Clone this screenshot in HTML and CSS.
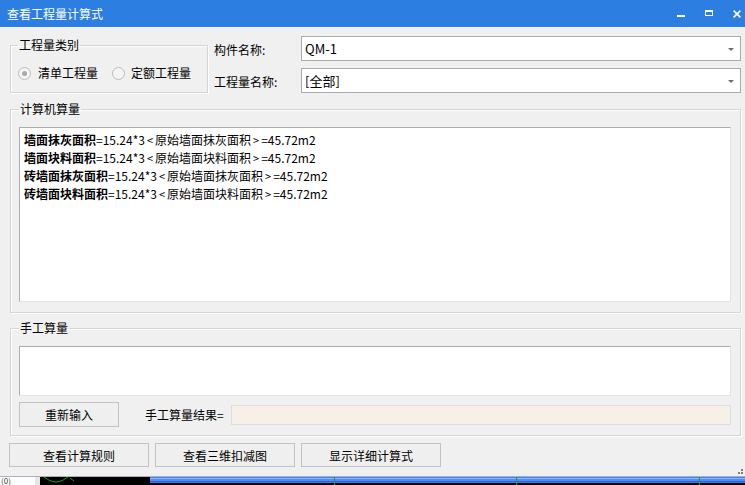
FILE: index.html
```html
<!DOCTYPE html>
<html lang="zh-CN">

<head>
    <meta charset="UTF-8" />
    <title>查看工程量计算式</title>
    <link rel="stylesheet" href="styles.css">
</head>

<body>
    <div class="window">
        <!-- Title bar -->
        <div class="titlebar">
            <span class="title">查看工程量计算式</span>
            <div class="controls">
                <svg width="8" height="8" viewBox="0 0 8 8"><rect x="0" y="5" width="8" height="2" fill="#fff" /></svg>
                <svg width="8" height="8" viewBox="0 0 8 8"><rect x="0.5" y="0.5" width="7" height="5" fill="none" stroke="#fff" /><rect x="0" y="0" width="8" height="2" fill="#fff" /></svg>
                <svg width="8" height="8" viewBox="0 0 8 8"><path d="M0.6 0.6 L7.4 7.4 M7.4 0.6 L0.6 7.4" stroke="#fff" stroke-width="1.6" /></svg>
            </div>
        </div>

        <div class="content">
            <div class="top-row">
                <fieldset class="group type-group">
                    <legend>工程量类别</legend>
                    <div class="radios">
                        <label class="radio"><span class="dot checked"></span>清单工程量</label>
                        <label class="radio"><span class="dot"></span>定额工程量</label>
                    </div>
                </fieldset>
                <div class="form">
                    <span class="label">构件名称:</span>
                    <div class="combo"><span class="combo-text">QM-1</span><span class="arrow"></span></div>
                    <span class="label">工程量名称:</span>
                    <div class="combo"><span class="combo-text">[全部]</span><span class="arrow"></span></div>
                </div>
            </div>

            <fieldset class="group calc-group">
                <legend>计算机算量</legend>
                <div class="textbox calc-text">
                    <div><b>墙面抹灰面积</b>=15.24*3<span class="ang">&lt;</span>原始墙面抹灰面积<span class="ang">&gt;</span>=45.72m2</div>
                    <div><b>墙面块料面积</b>=15.24*3<span class="ang">&lt;</span>原始墙面块料面积<span class="ang">&gt;</span>=45.72m2</div>
                    <div><b>砖墙面抹灰面积</b>=15.24*3<span class="ang">&lt;</span>原始墙面抹灰面积<span class="ang">&gt;</span>=45.72m2</div>
                    <div><b>砖墙面块料面积</b>=15.24*3<span class="ang">&lt;</span>原始墙面块料面积<span class="ang">&gt;</span>=45.72m2</div>
                </div>
            </fieldset>

            <fieldset class="group manual-group">
                <legend>手工算量</legend>
                <div class="textbox manual-text"></div>
                <div class="manual-row">
                    <button class="btn reset-btn">重新输入</button>
                    <span class="result-label">手工算量结果=</span>
                    <div class="result-box"></div>
                </div>
            </fieldset>

            <div class="actions">
                <button class="btn action-btn">查看计算规则</button>
                <button class="btn action-btn">查看三维扣减图</button>
                <button class="btn action-btn">显示详细计算式</button>
            </div>
        </div>

        <!-- Resize grip -->
        <svg class="grip" width="5" height="5" viewBox="0 0 5 5">
            <rect x="3" y="0" width="2" height="2" fill="#7f7f7f" />
            <rect x="0" y="3" width="2" height="2" fill="#7f7f7f" />
            <rect x="3" y="3" width="2" height="2" fill="#7f7f7f" />
        </svg>

        <!-- Application behind the dialog -->
        <div class="behind">
            <div class="behind-left">(0)</div>
            <div class="behind-gap"></div>
            <div class="behind-dark">
                <svg width="110" height="8" viewBox="0 0 110 8"><path d="M4 0 Q16 10 28 0 M30 1 L34 4" stroke="#1c9a2c" fill="none" stroke-width="1" /></svg>
            </div>
            <div class="behind-lines">
                <span class="tick" style="left:184px"></span>
                <span class="tick" style="left:366px"></span>
                <span class="tick" style="left:549px"></span>
            </div>
        </div>
    </div>
</body>

</html>
```

FILE: styles.css
```css
body {
    margin: 0;
    background-color: #f0f0f0;
    font-family: "Noto Sans CJK SC", "Liberation Sans", sans-serif;
    font-size: 12px;
    color: #000;
}

.window {
    width: 745px;
    height: 485px;
    display: flex;
    flex-direction: column;
    position: relative;
    overflow: hidden;
}

/* Title bar */
.titlebar {
    height: 27px;
    flex-shrink: 0;
    background-color: #2c7fe1;
    color: #fff;
    display: flex;
    padding: 0 4px 0 7px;
}

.title {
    flex: 1;
    line-height: 27px;
    font-size: 12px;
}

.controls {
    display: flex;
    gap: 20px;
    margin-top: 10px;
    height: 8px;
}

.controls svg {
    display: block;
}

/* Main content */
.content {
    padding: 9px 4px 0 10px;
    display: flex;
    flex-direction: column;
}

.top-row {
    display: flex;
    gap: 6px;
}

.group {
    margin: 0;
    min-width: 0;
    border: 1px solid #d5d5d5;
    box-shadow: inset 1px 1px 0 #fff, 1px 1px 0 #fff;
}

.group legend {
    padding: 0 1px;
    line-height: 16px;
    font-size: 12px;
}

.type-group {
    width: 198px;
    box-sizing: border-box;
    margin-top: 1px;
    padding: 12px 0 11px 7px;
}

.radios {
    display: flex;
    height: 16px;
    align-items: center;
}

.radio {
    display: flex;
    align-items: center;
    gap: 7px;
    margin-right: 14px;
    line-height: 16px;
}

.radio+.radio {
    gap: 6px;
}

.dot {
    width: 11px;
    height: 11px;
    border: 1px solid #bcbcbc;
    border-radius: 50%;
    background-color: #f4f4f4;
    display: flex;
    align-items: center;
    justify-content: center;
}

.dot.checked::after {
    content: "";
    width: 5px;
    height: 5px;
    border-radius: 50%;
    background-color: #a9a9a9;
}

.form {
    display: grid;
    grid-template-columns: 87px 440px;
    row-gap: 7px;
    align-items: center;
}

.label {
    padding-top: 2px;
}

.combo {
    height: 25px;
    box-sizing: border-box;
    border: 1px solid #ababab;
    background-color: #fff;
    display: flex;
    align-items: center;
    justify-content: space-between;
    padding: 0 6px 0 3px;
}

.combo-text {
    font-size: 13px;
}

.arrow {
    width: 0;
    height: 0;
    border-left: 3px solid transparent;
    border-right: 3px solid transparent;
    border-top: 3px solid #6d6d6d;
    margin-top: 1px;
}

.textbox {
    background-color: #fff;
    border: 1px solid;
    border-color: #adadad #e3e3e3 #e3e3e3 #adadad;
    box-sizing: border-box;
}

.calc-group {
    margin-top: 8px;
    padding: 10px 9px 10px 8px;
}

.calc-text {
    height: 175px;
    padding: 3px 4px;
    line-height: 17px;
}

.calc-text .ang {
    padding: 0 2px;
    font-size: 11px;
}

.manual-group {
    margin-top: 7px;
    padding: 10px 9px 8px 8px;
}

.manual-text {
    height: 50px;
}

.manual-row {
    display: flex;
    align-items: center;
    margin-top: 6px;
}

.btn {
    font-family: inherit;
    font-size: 12px;
    color: #000;
    background-color: #efefef;
    border: 1px solid #c2c2c2;
    padding: 0;
    box-sizing: border-box;
}

.reset-btn {
    width: 100px;
    height: 25px;
}

.result-label {
    margin-left: 26px;
}

.result-box {
    margin-left: auto;
    width: 500px;
    height: 20px;
    box-sizing: border-box;
    background-color: #f8efe6;
    border: 1px solid #dedede;
}

.actions {
    display: flex;
    gap: 6px;
    margin: 7px 0 0 -1px;
}

.action-btn {
    width: 140px;
    height: 24px;
}

.grip {
    position: absolute;
    left: 738px;
    top: 469px;
}

/* Strip of the window behind */
.behind {
    margin-top: auto;
    height: 8px;
    display: flex;
    border-top: 1px solid #a8b0bd;
}

.behind-left {
    width: 35px;
    background-color: #fff;
    font-size: 8px;
    line-height: 8px;
    overflow: hidden;
    padding-left: 1px;
    box-sizing: border-box;
    color: #333;
}

.behind-gap {
    width: 5px;
    background-color: #e6e6e6;
}

.behind-dark {
    width: 110px;
    background-color: #000;
}

.behind-dark svg {
    display: block;
}

.behind-lines {
    flex: 1;
    position: relative;
    background: linear-gradient(#3f84ff 0, #3f84ff 1px, #8fb6ff 1px, #8fb6ff 2px, #4b8cff 2px, #4b8cff 4px, #2a62d8 4px, #2a62d8 5px, #3b7cf0 5px, #3b7cf0 6px, #000 6px);
}

.tick {
    position: absolute;
    top: 0;
    width: 1px;
    height: 8px;
    background-color: #1c9a2c;
}
```
